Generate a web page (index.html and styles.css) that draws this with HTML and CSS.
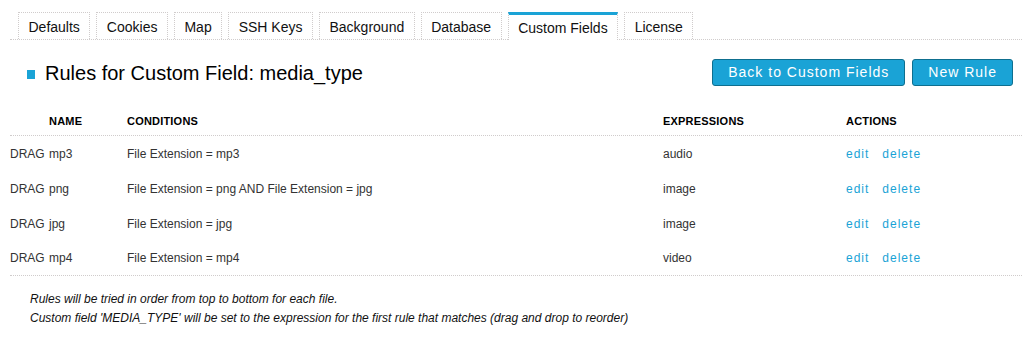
FILE: index.html
```html
<!DOCTYPE html>
<html lang="en">
<head>
  <meta charset="utf-8" />
  <title>Rules for Custom Field</title>
  <link rel="stylesheet" href="styles.css">
</head>
<body>
  <!-- tabs -->
  <ul class="tabs">
    <li><a href="#">Defaults</a></li>
    <li><a href="#">Cookies</a></li>
    <li><a href="#">Map</a></li>
    <li><a href="#">SSH Keys</a></li>
    <li><a href="#">Background</a></li>
    <li><a href="#">Database</a></li>
    <li class="active"><a href="#">Custom Fields</a></li>
    <li><a href="#">License</a></li>
  </ul>

  <div class="page-head">
    <h1 class="title">Rules for Custom Field: media_type</h1>
    <div class="head-buttons">
      <a class="btn" href="#">Back to Custom Fields</a>
      <a class="btn" href="#">New Rule</a>
    </div>
  </div>

  <div class="rules">
    <div class="row head">
      <span></span><span>Name</span><span>Conditions</span><span>Expressions</span><span>Actions</span>
    </div>
    <div class="row">
      <span>DRAG</span><span>mp3</span><span>File Extension = mp3</span><span>audio</span>
      <span class="actions"><a href="#">edit</a><a href="#">delete</a></span>
    </div>
    <div class="row">
      <span>DRAG</span><span>png</span><span>File Extension = png AND File Extension = jpg</span><span>image</span>
      <span class="actions"><a href="#">edit</a><a href="#">delete</a></span>
    </div>
    <div class="row">
      <span>DRAG</span><span>jpg</span><span>File Extension = jpg</span><span>image</span>
      <span class="actions"><a href="#">edit</a><a href="#">delete</a></span>
    </div>
    <div class="row">
      <span>DRAG</span><span>mp4</span><span>File Extension = mp4</span><span>video</span>
      <span class="actions"><a href="#">edit</a><a href="#">delete</a></span>
    </div>
  </div>

  <p class="note">
    Rules will be tried in order from top to bottom for each file.<br>
    Custom field 'MEDIA_TYPE' will be set to the expression for the first rule that matches (drag and drop to reorder)
  </p>
</body>
</html>
```

FILE: styles.css
```css
:root{
  --blue:#1aa3d6;
  --blue-dark:#0e6f8f;
  --text:#333;
  --dots:#d0cccc;
}

*{box-sizing:border-box;margin:0;padding:0}
body{
  font-family:"Liberation Sans",Arial,Helvetica,sans-serif;
  color:var(--text);background:#fff;
  padding:12px 0 0 10px;
}
a{text-decoration:none}

/* —— Tabs —— */
.tabs{
  list-style:none;display:flex;gap:6px;
  padding-left:8px;border-bottom:1px dotted var(--dots);
}
.tabs li{
  border:1px dotted var(--dots);border-bottom:none;
  height:27px;display:flex;align-items:center;
}
.tabs a{color:#111;font-size:14px;padding:2px 9.5px 0 9.5px}
.tabs li.active{border-top:3px solid var(--blue);margin-bottom:-1px;height:28px;background:#fff}
.tabs li.active a{padding-top:1px}

/* —— Heading —— */
.page-head{
  display:flex;align-items:center;justify-content:space-between;
  padding:19px 9px 0 17px;
}
.title{
  font-size:20px;font-weight:normal;color:#000;
  display:flex;align-items:center;gap:10px;padding-top:2px;
}
.title::before{content:"";width:8px;height:9px;background:var(--blue);margin-top:1px}
.head-buttons{display:flex;gap:7px}
.btn{
  display:block;height:27px;line-height:25px;padding:0 15px;
  background:var(--blue);border:1px solid var(--blue-dark);border-radius:3px;
  color:#fff;font-size:14px;letter-spacing:1px;
}

/* —— Rules table —— */
.rules{margin-top:23px}
.row{
  display:grid;grid-template-columns:39px 78px 536px 183px 1fr;
  align-items:center;height:35px;font-size:12px;
}
.row.head{
  height:27px;font-size:11px;font-weight:bold;color:#000;
  text-transform:uppercase;letter-spacing:.2px;
  border-bottom:1px dotted var(--dots);padding-bottom:2px;
}
.row:last-child{border-bottom:1px dotted var(--dots)}
.actions{display:flex;gap:13px}
.actions a{color:var(--blue);letter-spacing:1px}

.note{
  font-size:12px;font-style:italic;color:#111;
  line-height:19px;padding:14px 0 0 20px;
}
```
